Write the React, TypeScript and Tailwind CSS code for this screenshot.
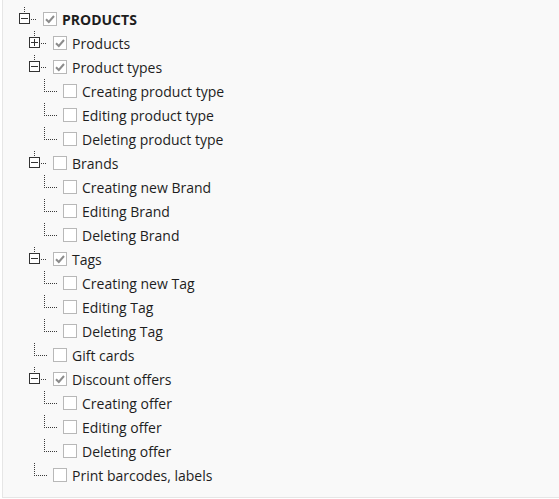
import React from "react";

type Node = {
  label: string;
  checked?: boolean;
  bold?: boolean;
  collapsed?: boolean;
  children?: Node[];
};

const tree: Node = {
  label: "PRODUCTS",
  checked: true,
  bold: true,
  children: [
    { label: "Products", checked: true, collapsed: true, children: [] },
    {
      label: "Product types",
      checked: true,
      children: [
        { label: "Creating product type" },
        { label: "Editing product type" },
        { label: "Deleting product type" },
      ],
    },
    {
      label: "Brands",
      children: [
        { label: "Creating new Brand" },
        { label: "Editing Brand" },
        { label: "Deleting Brand" },
      ],
    },
    {
      label: "Tags",
      checked: true,
      children: [
        { label: "Creating new Tag" },
        { label: "Editing Tag" },
        { label: "Deleting Tag" },
      ],
    },
    { label: "Gift cards" },
    {
      label: "Discount offers",
      checked: true,
      children: [
        { label: "Creating offer" },
        { label: "Editing offer" },
        { label: "Deleting offer" },
      ],
    },
    { label: "Print barcodes, labels" },
  ],
};

// connector drawn per row: "└" for leaves, boxed +/- for branches
function Connector({ branch, open }: { branch: boolean; open: boolean }) {
  const dots = { stroke: "#3a3a3a", strokeWidth: 1, strokeDasharray: "1 1" };
  return (
    <svg width="29" height="24" className="shrink-0">
      {branch ? (
        <>
          <line x1="10.5" y1="0" x2="10.5" y2="6" {...dots} />
          <rect x="5.5" y="6.5" width="10" height="10" fill="#fff" stroke="#333" />
          <line x1="7" y1="11.5" x2="14" y2="11.5" stroke="#333" />
          {!open && <line x1="10.5" y1="8" x2="10.5" y2="15" stroke="#333" />}
          <line x1="17" y1="12.5" x2="23" y2="12.5" {...dots} />
        </>
      ) : (
        <>
          <line x1="10.5" y1="0" x2="10.5" y2="12" {...dots} />
          <line x1="10" y1="12.5" x2="23" y2="12.5" {...dots} />
        </>
      )}
    </svg>
  );
}

function Checkbox({ checked }: { checked?: boolean }) {
  return (
    <span className="flex h-[14px] w-[14px] shrink-0 items-center justify-center border border-[#b8b8b8] bg-white">
      {checked && (
        <svg width="12" height="12" viewBox="0 0 12 12">
          <path d="M2 6.2 L4.8 9 L10 3" fill="none" stroke="#8c8c8c" strokeWidth="2" />
        </svg>
      )}
    </span>
  );
}

function Rows({ node, level }: { node: Node; level: number }) {
  const branch = node.children !== undefined;
  const open = branch && !node.collapsed;
  return (
    <>
      <li className="flex h-6 items-center" style={{ paddingLeft: 11 + level * 10 }}>
        <Connector branch={branch} open={open} />
        <Checkbox checked={node.checked} />
        <span
          className={
            "ml-[5px] whitespace-nowrap text-[14px] text-[#1e1e1e] " +
            (node.bold ? "font-bold" : "")
          }
        >
          {node.label}
        </span>
      </li>
      {open &&
        node.children!.map((c) => <Rows key={c.label} node={c} level={level + 1} />)}
    </>
  );
}

export default function App() {
  return (
    <div className="h-[499px] w-[559px] bg-white font-['Open_Sans',sans-serif]">
      <div className="ml-[2px] h-[498px] border-b border-l border-[#e6e6e6] bg-[#f9f9f9] pt-[7px]">
        <ul>
          <Rows node={tree} level={0} />
        </ul>
      </div>
    </div>
  );
}
